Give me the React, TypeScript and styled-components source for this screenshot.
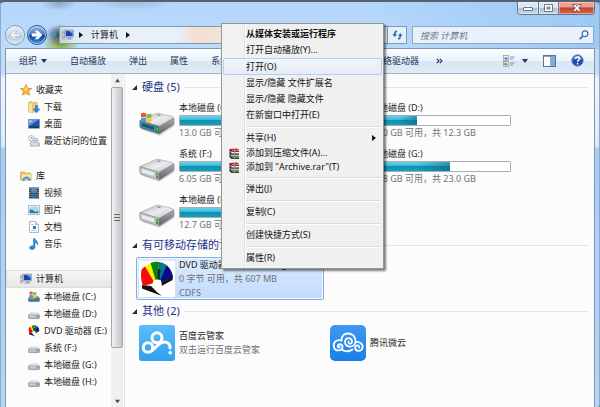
import React from "react";
import styled, { createGlobalStyle, css } from "styled-components";

const GlobalStyle = createGlobalStyle`
  * { box-sizing: border-box; }
  body {
    margin: 0;
    font: 9px/12px "Noto Sans", "Noto Sans CJK SC", sans-serif;
    color: #1c1c1c;
  }
  button, input { font: inherit; color: inherit; }
  button { padding: 0; border: 0; background: none; text-align: left; }
  ul { margin: 0; padding: 0; list-style: none; }
  svg { display: block; flex: none; }
`;

/* ---------- window frame ---------- */

const Desktop = styled.div`
  min-height: 100vh;
  display: flex;
  background: linear-gradient(#5b6b7c 60%, #4c9a3f 98%);
`;

const Frame = styled.div`
  position: relative;
  flex: 1;
  min-width: 0;
  display: flex;
  flex-direction: column;
  padding: 0 4px 1px;
  border: 1px solid #8fa9c6;
  border-top: 2px solid #56616e;
  border-bottom: 0;
  border-radius: 5px 5px 6px 0;
  background:
    radial-gradient(ellipse 15px 11px at 59px 33px, #414a58 10%, transparent 100%),
    radial-gradient(ellipse 18px 9px at 60px 42px, #8fae45 20%, transparent 100%),
    radial-gradient(ellipse 18px 8px at 58px 1px, #93abc8 10%, transparent 100%),
    radial-gradient(ellipse 42px 7px at 132px 1px, #a5bedd 10%, transparent 100%),
    linear-gradient(90deg, transparent 60%, #9cc8f4 100%) 0 0 / 100% 47px no-repeat,
    linear-gradient(#b3d6fc 0, #c3defb 72px, #eef6fe 76px, #dcebfb 145px, #a8cef6 146px, #b5d5f6 100%);
`;

const TitleBar = styled.header`
  height: 24px;
  display: flex;
  justify-content: flex-end;
  align-items: flex-start;
`;

const Caption = styled.div`
  display: flex;
  border: 1px solid #65758a;
  border-top: 0;
  border-radius: 0 0 4px 4px;
  overflow: hidden;
`;

const CaptionButton = styled.button<{ $close?: boolean }>`
  width: ${(p) => (p.$close ? 36 : 20)}px;
  height: 12px;
  display: grid;
  place-items: center;
  background: linear-gradient(#dfe9f5 0 45%, #a9bfd9 50%, #c4d9f0);
  box-shadow: inset 0 0 0 1px #ffffff66;
  & + & { border-left: 1px solid #65758a; }
  ${(p) => p.$close && css`background: linear-gradient(#e8a192 0 40%, #c5402c 50%, #d9674b);`}
`;

const NavBar = styled.div`
  display: flex;
  align-items: center;
  height: 18px;
  padding-right: 1px;
`;

const History = styled.div`
  display: flex;
  align-items: center;
  gap: 2px;
  width: 54px;
`;

const RoundButton = styled.button<{ $active?: boolean }>`
  flex: none;
  width: 20px;
  height: 20px;
  border-radius: 50%;
  display: grid;
  place-items: center;
  border: 1px solid ${(p) => (p.$active ? "#34588d" : "#8298b1")};
  box-shadow: inset 0 0 0 1px #ffffffaa;
  background: ${(p) =>
    p.$active
      ? "linear-gradient(#9dbbe2 0, #4a7fc8 45%, #0c3c94 52%, #2d9be6 100%)"
      : "linear-gradient(#e4edf7 0, #cddceb 48%, #b3c8de 52%, #d9e7f5 100%)"};
`;

const ArrowButton = styled.button`
  flex: none;
  display: grid;
  place-items: center;
  width: 10px;
  height: 16px;
`;

const AddressBar = styled.div`
  flex: 1;
  min-width: 0;
  height: 18px;
  display: flex;
  align-items: center;
  gap: 2px;
  border: 1px solid #8398ae;
  background: linear-gradient(90deg, #dfe9f3cc, #eef4fbe6 15%, #e6f0fb 34%, #f3dfd0 39%, #efe6de 50%, #e8f0f9 80%);
  padding-left: 2px;
`;

const Crumb = styled.button`
  padding: 0 3px;
  line-height: 14px;
`;

const Refresh = styled.button`
  margin-left: auto;
  width: 19px;
  height: 16px;
  display: grid;
  place-items: center;
  border-left: 1px solid #8398ae;
  background: #e6f0fb;
`;

const SearchBox = styled.label`
  flex: none;
  width: 182px;
  height: 18px;
  margin-left: 5px;
  padding: 0 4px 0 7px;
  display: flex;
  align-items: center;
  border: 1px solid #8fa8c3;
  background: #e9f2fc;
`;

const SearchInput = styled.input`
  flex: 1;
  min-width: 0;
  border: 0;
  padding: 0;
  height: 14px;
  background: none;
  outline: none;
  &::placeholder { color: #6d7680; font-style: italic; opacity: 1; }
`;

const Client = styled.div`
  flex: 1;
  display: flex;
  flex-direction: column;
  margin-top: 4px;
  border: 1px solid #8097b3;
  border-bottom-color: #c4d6ea;
  background: #fcfcfd;
`;

const Toolbar = styled.div`
  flex: none;
  height: 25px;
  display: flex;
  align-items: center;
  padding: 0 10px 1px 13px;
  gap: 23px;
  color: #1e395b;
  border-bottom: 1px solid #a0b3cb;
  background: linear-gradient(#fbfdff 0, #eaf2fb 48%, #dae6f4 52%, #dfeaf7 100%);
`;

const Tool = styled.button<{ $gap?: number }>`
  display: flex;
  align-items: center;
  gap: ${(p) => p.$gap ?? 4}px;
  white-space: nowrap;
  flex: none;
`;

const MoreTools = styled(Tool)`
  margin-left: -6px;
`;

const ToolIcons = styled.div`
  margin-left: auto;
  display: flex;
  align-items: center;
  gap: 15px;
`;

const Body = styled.div`
  flex: 1;
  display: flex;
`;

/* ---------- navigation pane ---------- */

const SidePane = styled.nav`
  flex: none;
  width: 105px;
  padding-top: 7px;
`;

const SideGroup = styled.ul`
  margin-bottom: 18px;
`;

const SideItem = styled.a<{ $root?: boolean; $selected?: boolean }>`
  display: flex;
  align-items: center;
  gap: 4px;
  height: ${(p) => (p.$selected ? 18 : 17)}px;
  padding-left: ${(p) => (p.$root ? (p.$selected ? 13 : 14) : 22)}px;
  color: inherit;
  text-decoration: none;
  white-space: nowrap;
  ${(p) => p.$selected && css`
    border: 1px solid #dcdcdc;
    border-right: 0;
    border-radius: 2px 0 0 2px;
    background: linear-gradient(#f8f8f8, #e6e6e6);
  `}
`;

const ScrollTrack = styled.div`
  flex: none;
  width: 12px;
  display: flex;
  flex-direction: column;
  align-items: center;
  background: #f0f0f1;
`;

const ScrollButton = styled.button`
  width: 12px;
  height: 13px;
  display: grid;
  place-items: center;
`;

const ScrollThumb = styled.div`
  flex: 11;
  width: 12px;
  display: grid;
  place-items: center;
  border: 1px solid #a5a5a8;
  border-radius: 2px;
  background: linear-gradient(90deg, #f3f3f4, #dcdcde 45%, #c3c4c8);
`;

const ScrollRest = styled.div`
  flex: 2;
`;

/* ---------- file list ---------- */

const Content = styled.main`
  flex: 1;
  min-width: 0;
  margin-left: 1px;
  padding: 5px 5px 0 7px;
  border-left: 1px solid #dce9f6;
`;

const GroupHeading = styled.h2`
  margin: 0;
  height: 16px;
  display: flex;
  align-items: center;
  gap: 5px;
  font-size: 11px;
  line-height: 16px;
  font-weight: 400;
  color: #1e3287;
  white-space: nowrap;
  &::after { content: ""; flex: 1; height: 1px; background: #e2e4e8; }
`;

const Tiles = styled.ul<{ $compact?: boolean }>`
  display: grid;
  grid-template-columns: 188px 188px;
  gap: 3px;
  margin: ${(p) => (p.$compact ? "2px 0 0 4px" : "4px 0 3px 4px")};
`;

const TileBox = styled.li<{ $selected?: boolean }>`
  height: 43px;
  display: flex;
  align-items: center;
  gap: 4px;
  padding: 0 3px 0 2px;
  border: 1px solid transparent;
  border-radius: 2px;
  ${(p) => p.$selected && css`
    border-color: #84acdd;
    background: linear-gradient(#dcebfd, #c1dbfc);
    box-shadow: inset 0 0 0 1px #eef6ff;
  `}
`;

const TileText = styled.div<{ $loose?: boolean }>`
  flex: 1;
  min-width: 0;
  display: flex;
  flex-direction: column;
  gap: ${(p) => (p.$loose ? 2 : 1)}px;
  white-space: nowrap;
`;

const Muted = styled.span`
  color: #6f7378;
`;

const Usage = styled.div`
  height: 11px;
  border: 1px solid #a9acb0;
  border-radius: 1px;
  background: #fff;
`;

const UsageFill = styled.div`
  height: 9px;
  background:
    linear-gradient(90deg, transparent 60%, #0b5f7a88),
    linear-gradient(#6fd3ea 0, #38bbd9 40%, #0c92b0 48%, #179fbd 100%);
`;

/* ---------- context menu ---------- */

const Menu = styled.div`
  position: absolute;
  left: 220px;
  top: 21px;
  width: 163px;
  padding: 1px 1px 2px;
  border: 1px solid #979797;
  background: linear-gradient(90deg, #f1f1f1 22px, #dfe0e1 22px 23px, #fff 23px 24px, #f0f0f0 24px);
  box-shadow: 2px 2px 2px #00000080;
`;

const MenuItem = styled.button<{ $size?: "tall" | "short"; $bold?: boolean; $hot?: boolean }>`
  width: 100%;
  height: ${(p) => (p.$size === "tall" ? 17 : p.$size === "short" ? 14 : 16)}px;
  display: grid;
  grid-template-columns: 16px 1fr 8px;
  align-items: center;
  column-gap: 4px;
  padding: 0 2px 0 2px;
  border: 1px solid transparent;
  border-radius: 2px;
  color: #111;
  white-space: nowrap;
  font-weight: ${(p) => (p.$bold ? 700 : 400)};
  ${(p) => p.$hot && css`
    border-color: #aecff7;
    background: linear-gradient(#f2f5f9, #e5ecf5);
  `}
`;

const MenuIcon = styled.span`
  display: grid;
  place-items: center;
`;

const MenuRule = styled.hr`
  margin: 3px 1px 2px 23px;
  height: 2px;
  border: 0;
  background: linear-gradient(#dcdcdc 50%, #fff 50%);
`;

/* ---------- drawings ---------- */

const Triangle = ({ dir, color = "#111", size = 6 }: { dir: "up" | "down" | "right"; color?: string; size?: number }) => {
  const d = { up: "M0 5 3 1 6 5Z", down: "M0 1 6 1 3 5Z", right: "M1 0 5 3 1 6Z" }[dir];
  return <svg width={size} height={size} viewBox="0 0 6 6"><path d={d} fill={color} /></svg>;
};

const Expanded = () => <svg width="5" height="5" viewBox="0 0 5 5"><path d="M5 0V5H0Z" fill="#2b2b2b" /></svg>;

const HistoryArrow = ({ back }: { back?: boolean }) => (
  <svg width="14" height="14" viewBox="0 0 14 14">
    <path
      d={back ? "M12 5.7H6.4L9 3H6L2 7l4 4h3L6.4 8.3H12Z" : "M2 5.7H7.6L5 3H8L12 7 8 11H5L7.6 8.3H2Z"}
      fill={back ? "#eef4fa" : "#fff"}
      stroke={back ? "#a9bccf" : "#fff"}
      strokeWidth=".6"
    />
  </svg>
);

const ComputerIcon = () => (
  <svg width="12" height="12" viewBox="0 0 12 12">
    <path d="M.5 2h2.2v8H.5Z" fill="#d3d8df" stroke="#8c96a3" strokeWidth=".5" />
    <path d="M1 4h1.2M1 8h1.2" stroke="#56657a" strokeWidth=".7" />
    <rect x="3" y="1" width="8.6" height="7" fill="#c9d5e3" stroke="#6e7e93" strokeWidth=".5" />
    <rect x="3.9" y="1.9" width="6.8" height="5.2" fill="#1745b8" />
    <path d="M7 1.9h3.7v3Z" fill="#7aaef2" />
    <path d="M6 8h3v1.6h1.4v1H4.6v-1H6Z" fill="#9aa8ba" />
  </svg>
);

const RefreshIcon = () => (
  <svg width="11" height="10" viewBox="0 0 11 10" fill="none" stroke="#2c6cb5" strokeWidth="1.5">
    <path d="M5 1.2C3 1.2 2.7 2.2 2.7 4.6" /><path d="M.4 4h4.6L2.7 7Z" fill="#2c6cb5" stroke="none" />
    <path d="M6 8.8c2 0 2.3-1 2.3-3.4" /><path d="M6 6h4.600L8.300 3Z" fill="#2c6cb5" stroke="none" />
  </svg>
);

const SearchIcon = () => (
  <svg width="10" height="10" viewBox="0 0 10 10" fill="none" stroke="#2d6fb8">
    <circle cx="6" cy="3.8" r="2.9" strokeWidth="1.2" fill="#f4f9ff" /><path d="M3.8 6 .8 9.2" strokeWidth="1.7" />
  </svg>
);

const ViewIcon = () => (
  <svg width="12" height="12" viewBox="0 0 12 12">
    <rect x=".5" y=".5" width="5" height="5" fill="#eef4fa" stroke="#8293a8" strokeWidth=".7" />
    <rect x="1.5" y="2.4" width="3" height="2.2" fill="#3c86c6" />
    <rect x=".5" y="6.5" width="5" height="5" fill="#fff" stroke="#8293a8" strokeWidth=".7" />
    <path d="M1.5 7.5H3V9H1.5Z" fill="#d8503a" /><path d="M3 7.5h1.5V9H3Z" fill="#e9bc32" />
    <path d="M1.5 9H3v1.5H1.5Z" fill="#3274bf" /><path d="M3 9h1.5v1.5H3Z" fill="#5aa94a" />
    <path d="M7 2h4.5M7 4h3M7 8h4.5M7 10h3" stroke="#75879d" strokeWidth=".9" />
  </svg>
);

const PreviewIcon = () => (
  <svg width="13" height="12" viewBox="0 0 13 12">
    <rect x=".5" y=".5" width="12" height="11" fill="#fff" stroke="#5d7390" />
    <path d="M1 1.5h11" stroke="#8ba4c1" /><rect x="8" y="2" width="4" height="9" fill="#72b3e6" />
    <path d="M7.5 1v10" stroke="#5d7390" strokeWidth=".6" />
  </svg>
);

const HelpIcon = () => (
  <svg width="13" height="13" viewBox="0 0 13 13">
    <circle cx="6.5" cy="6.5" r="5.8" fill="#1d4cb3" stroke="#8ea3c4" strokeWidth="1" />
    <path d="M2 5.5a4.6 4.6 0 0 1 9 0Q6.5 3.8 2 5.5Z" fill="#6f95dc" />
    <path d="M4.6 5c0-2.6 4-2.6 4-.3C8.600 6.200 6.600 6 6.600 7.800" fill="none" stroke="#fff" strokeWidth="1.5" />
    <circle cx="6.600" cy="9.700" r=".9" fill="#fff" />
  </svg>
);

const StarIcon = () => (
  <svg width="12" height="12" viewBox="0 0 12 12">
    <path d="M6 .5 7.6 4.2 11.600 4.500 8.600 7.200 9.500 11.200 6 9.100 2.500 11.200 3.400 7.200.4 4.500 4.400 4.200Z" fill="#fdb62d" stroke="#d9822b" strokeWidth=".7" />
    <path d="M6 2.200 7 5 6 6.500 3 5.200 5 4.900Z" fill="#ffe38a" />
  </svg>
);

const DownloadIcon = () => (
  <svg width="12" height="12" viewBox="0 0 12 12">
    <path d="M.8 1.200 4 .4 5 1.500h4V11H.8Z" fill="#f5cf70" stroke="#c79a3a" strokeWidth=".5" />
    <path d="M.8 1.200 4.500 2.500V12L.8 11Z" fill="#fbe4a0" stroke="#cfa650" strokeWidth=".4" />
    <path d="M7.200 4.500h2.600V8H12l-3.500 3.800L5 8h2.200Z" fill="#2b86d9" stroke="#1c63ae" strokeWidth=".4" />
  </svg>
);

const DesktopIcon = () => (
  <svg width="12" height="12" viewBox="0 0 12 12">
    <rect x=".4" y="1.400" width="11.200" height="8.800" fill="#1c57ae" stroke="#7b91ad" strokeWidth=".7" />
    <path d="M1 2h9L1 8Z" fill="#5d9be4" /><path d="M1 9h10" stroke="#102b55" strokeWidth="1.200" />
    <rect x="1.500" y="2.500" width="2" height="1.500" fill="#dbe9fa" />
  </svg>
);

const RecentIcon = () => (
  <svg width="12" height="12" viewBox="0 0 12 12">
    <path d="M3.500 3.500h6l.7 5h1.300v2.600H2.500V9Z" fill="#d6dce3" stroke="#8490a0" strokeWidth=".6" />
    <path d="M5 5.500h3.500M5 7.200h4" stroke="#8d99a8" strokeWidth=".6" />
    <circle cx="3.300" cy="3.300" r="2.800" fill="#f4f7fa" stroke="#929dac" strokeWidth=".7" />
    <path d="M3.300 1.700v1.800h1.500" fill="none" stroke="#56677d" strokeWidth=".6" />
  </svg>
);

const LibraryIcon = () => (
  <svg width="12" height="12" viewBox="0 0 12 12">
    <path d="M.5 2h4l1 1h5v7H.5Z" fill="#f2c966" stroke="#c59a45" strokeWidth=".6" />
    <path d="M1.500 4h10v6h-10Z" fill="#fae6a6" stroke="#cfa95a" strokeWidth=".4" />
    <path d="M2.500 10.500c0-5 8-5 8 0H8.600c0-2.400-4.200-2.400-4.200 0Z" fill="#53a5dc" stroke="#2f7db8" strokeWidth=".4" />
  </svg>
);

const VideoIcon = () => (
  <svg width="12" height="12" viewBox="0 0 12 12">
    <rect x="1" y=".5" width="10" height="11" fill="#353f4c" /><rect x="3.200" y="1" width="5.600" height="4.600" fill="#4f93cd" />
    <rect x="3.200" y="6.400" width="5.600" height="4.600" fill="#2f6ea5" />
    <path d="M2 1v10M10 1v10" stroke="#d5dbe2" strokeWidth=".9" strokeDasharray="1 1" />
    <path d="M4 5.400 6 3l2 2.400Z" fill="#b06a44" />
  </svg>
);

const PictureIcon = () => (
  <svg width="12" height="12" viewBox="0 0 12 12">
    <rect x=".4" y="1.400" width="11.200" height="9" fill="#fff" stroke="#98a3b0" strokeWidth=".7" />
    <rect x="1.600" y="2.600" width="8.800" height="6.600" fill="#a7d5f2" />
    <path d="M1.600 9.200V5.500Q4 5 6 7t4.400-.5v2.700Z" fill="#2b7a93" />
  </svg>
);

const DocumentIcon = () => (
  <svg width="12" height="12" viewBox="0 0 12 12">
    <path d="M1.500.5h6L10.500 3.500v8h-9Z" fill="#fff" stroke="#8c9bad" strokeWidth=".7" />
    <path d="M7.500.5v3h3" fill="#dde5ee" stroke="#8c9bad" strokeWidth=".6" />
    <path d="M3 3.500h3M3 9.500h6" stroke="#a7b4c4" strokeWidth=".7" /><rect x="5" y="5" width="3" height="3" fill="#2f7ecb" />
  </svg>
);

const MusicIcon = () => (
  <svg width="12" height="12" viewBox="0 0 12 12">
    <path d="M5.500.5H7c.3 2.200 3.800 2.600 2.600 6.500C9.200 5.300 8 4.700 7 4.600V9.200c0 3-5.500 3.200-5.500.6 0-1.900 2.500-2.500 4-1.800Z" fill="#1f8be0" stroke="#1668b4" strokeWidth=".4" />
  </svg>
);

const WindowsFlag = () => (
  <g>
    <path d="M0 1.500Q2.500 0 4.800 1.300V5.200Q2.500 4 0 5.500Z" fill="#e8532b" />
    <path d="M5.400 1.600Q8 2.800 10.400 1.300V5.200Q8 6.700 5.400 5.500Z" fill="#7cbb3d" />
    <path d="M0 6.200Q2.500 4.800 4.800 6V10Q2.500 8.700 0 10.200Z" fill="#3d9be0" />
    <path d="M5.400 6.300Q8 7.500 10.400 6V9.900Q8 11.400 5.400 10.200Z" fill="#fac33a" />
  </g>
);

const SmallDrive = ({ system }: { system?: boolean }) => (
  <svg width="12" height="12" viewBox="0 0 12 12">
    <path d="M2.200 5h7.600l1.800 2.400H.4Z" fill={system ? "#78a6b8" : "#eceef0"} stroke="#9a9ea3" strokeWidth=".4" />
    <rect x=".4" y="7" width="11.200" height="3.600" rx="1" fill={system ? "#27718c" : "#b9bdc2"} stroke="#74797f" strokeWidth=".6" />
    <path d="M1.500 8h6" stroke="#fff" strokeWidth=".7" opacity=".7" />
    <rect x="8.800" y="8.200" width="1.500" height="1.200" fill="#47a33c" />
    {system && <g transform="translate(1.500 0) scale(.65)"><WindowsFlag /></g>}
  </svg>
);

const DriveIcon = ({ system }: { system?: boolean }) => (
  <svg width="36" height="36" viewBox="0 0 36 36">
    <defs>
      <linearGradient id="drive-top" x1="0" y1="0" x2="1" y2="1">
        <stop offset="0" stopColor="#b0b2b5" /><stop offset=".5" stopColor="#ebecee" /><stop offset="1" stopColor="#bcbec1" />
      </linearGradient>
      <linearGradient id="drive-side" x1="0" y1="0" x2="0" y2="1">
        <stop offset="0" stopColor="#a9abae" /><stop offset="1" stopColor="#5f6266" />
      </linearGradient>
    </defs>
    <path d="M2 25 20 31.500 35 22v1.500L20.500 33 3 27Z" fill="#00000022" />
    <path d="M1 17.500 17 10.500Q18.500 10 20 10.400L33.500 13.500 35 15 20 23.500Z" fill="url(#drive-top)" stroke="#8c8f93" strokeWidth=".5" />
    <path d="M20 23.500 35 15v6.500L20.500 31 19.500 30.500Z" fill="url(#drive-side)" stroke="#7b7e82" strokeWidth=".5" />
    <path d="M.8 17.500 20 23.300V31L2 25.200Q.8 24.500.8 23Z" fill={system ? "#337b93" : "#c4c6c9"} stroke="#75797d" strokeWidth=".6" />
    <path d="M2.500 19.500 15.500 23.400v4L2.500 23.500Z" fill={system ? "#155b76" : "#e9eef2"} stroke="#a9adb1" strokeWidth=".4" />
    <path d="M17.200 23.800 19.300 24.400V29.600L17.200 29Z" fill="#2f8f2c" /><path d="M17.700 25 18.800 25.300V27L17.700 26.700Z" fill="#7de466" />
    <ellipse cx="20" cy="12.300" rx="1.800" ry=".8" fill="#8c8f93" />
    {system && <g transform="translate(2 9)"><WindowsFlag /></g>}
  </svg>
);

const FanShapes = () => (
  <g>
    <path d="M3 24 12 25 17 30 22.500 34.800 3 27.500Z" fill="#111" />
    <path d="M2.500 8.500 6.500 5 15 18 13.500 22.500 4 25Q1 17 2.500 8.500Z" fill="#f50b0b" />
    <path d="M6 5.500 11.500 2 17 18.500 14.500 20Z" fill="#fff200" />
    <path d="M11.500 2Q16 .2 20 1L19.500 18.500 16.500 19Z" fill="#078113" />
    <path d="M20 1Q24.500 1.500 27.500 4L22 19 19 18.500Z" fill="#08798a" />
    <path d="M27.500 4Q33 9 34 16L22.500 21.500 21.500 18.500Z" fill="#09098c" />
    <path d="M34 15.500 33.500 19 22.500 25V21.500Z" fill="#111" />
    <path d="M19 8 21.500 9 20.500 19 18.500 18.500Z" fill="#06222b" />
    <path d="M14 22.500Q14.500 18.500 18.500 18.500 22.500 19 22.500 24 20.500 28 22 33.500L18 31Q14 26.500 14 22.500Z" fill="#fff" />
  </g>
);

const DiscIcon = ({ small }: { small?: boolean }) => (
  <svg width={small ? 12 : 36} height={small ? 12 : 36} viewBox="0 0 36 36">
    {!small && <rect width="36" height="36" fill="#fff" />}
    <FanShapes />
  </svg>
);

const BaiduIcon = () => (
  <svg width="36" height="36" viewBox="0 0 36 36" fill="none" stroke="#fff" strokeWidth="3" strokeLinecap="round">
    <defs><linearGradient id="baidu" x1="0" y1="0" x2="0" y2="1"><stop stopColor="#5abdf9" /><stop offset="1" stopColor="#31a0ee" /></linearGradient></defs>
    <rect width="36" height="36" rx="3" fill="url(#baidu)" stroke="none" />
    <circle cx="9" cy="22.500" r="4.700" />
    <circle cx="18" cy="12.800" r="5" />
    <path d="M12.500 26C16.500 23.500 19 18 24 17.200 28.500 16.500 31.500 19 31 23" />
    <circle cx="31.200" cy="27.800" r="1.800" fill="#fff" stroke="none" />
  </svg>
);

const WeiyunIcon = () => (
  <svg width="36" height="36" viewBox="0 0 36 36" fill="none" stroke="#fff" strokeWidth="1.800" strokeLinecap="round">
    <defs><linearGradient id="weiyun" x1="0" y1="0" x2="0" y2="1"><stop stopColor="#4098f2" /><stop offset="1" stopColor="#197fe8" /></linearGradient></defs>
    <rect width="36" height="36" rx="5" fill="url(#weiyun)" stroke="none" />
    <path d="M11.500 15.500C11 5.500 26 6.500 25.500 16.500 25 23.500 14.500 23 15 16.500 15.500 11.500 22.500 12.500 22 17 21.500 19.500 18 19 18.500 16.500" />
    <path d="M11.500 15.500C6 14 3 18 3.800 21.500 5 27.500 13 26 12.500 21.500 12 18.500 7.500 18.500 7.700 21.500 8 23 10 22.500 9.500 21.500" />
    <path d="M12.500 25C15.500 27 20 26.500 22.500 24.500" />
    <path d="M26 17C30 16.500 33.500 19.500 32.500 22.800 31 27.500 25 26.500 25.200 22.500 25.500 19.500 29.800 20 29.200 22.500" />
  </svg>
);

const RarIcon = () => (
  <svg width="11" height="11" viewBox="0 0 11 11">
    <path d="M1 1 8 .5 10 2v2H3L1 3Z" fill="#a5253f" /><path d="M1 4 3 5h7v2.200H3L1 6Z" fill="#2e4a96" />
    <path d="M1 7l2 1h7v2.500H3L1 9Z" fill="#267047" />
    <path d="M3 2.500h7M3 5.700h7M3 9h7" stroke="#e6d9c0" strokeWidth=".5" />
    <path d="M1 1v8.500l2 1.200h7" stroke="#191919" strokeWidth=".9" fill="none" /><path d="M5.500 1v9.500" stroke="#c98a2b" strokeWidth="1" />
  </svg>
);

/* ---------- data ---------- */

type SideEntry = { label: string; icon: React.ReactNode };

const favourites: SideEntry[] = [
  { label: "收藏夹", icon: <StarIcon /> },
  { label: "下载", icon: <DownloadIcon /> },
  { label: "桌面", icon: <DesktopIcon /> },
  { label: "最近访问的位置", icon: <RecentIcon /> },
];
const libraries: SideEntry[] = [
  { label: "库", icon: <LibraryIcon /> },
  { label: "视频", icon: <VideoIcon /> },
  { label: "图片", icon: <PictureIcon /> },
  { label: "文档", icon: <DocumentIcon /> },
  { label: "音乐", icon: <MusicIcon /> },
];
const computer: SideEntry[] = [
  { label: "计算机", icon: <ComputerIcon /> },
  { label: "本地磁盘 (C:)", icon: <SmallDrive system /> },
  { label: "本地磁盘 (D:)", icon: <SmallDrive /> },
  { label: "DVD 驱动器 (E:)", icon: <DiscIcon small /> },
  { label: "系统 (F:)", icon: <SmallDrive /> },
  { label: "本地磁盘 (G:)", icon: <SmallDrive /> },
  { label: "本地磁盘 (H:)", icon: <SmallDrive /> },
];

const drives = [
  { name: "本地磁盘 (C:)", note: "13.0 GB 可用，共 40.0 GB", used: 67, system: true },
  { name: "本地磁盘 (D:)", note: "8.20 GB 可用，共 12.3 GB", used: 33 },
  { name: "系统 (F:)", note: "6.05 GB 可用，共 20.0 GB", used: 70 },
  { name: "本地磁盘 (G:)", note: "9.88 GB 可用，共 23.0 GB", used: 57 },
  { name: "本地磁盘 (H:)", note: "12.7 GB 可用，共 30.0 GB", used: 58 },
];

const tools = ["自动播放", "弹出", "属性", "系统属性", "卸载或更改程序", "映射网络驱动器"];

const SideList = ({ entries, selected }: { entries: SideEntry[]; selected?: boolean }) => (
  <SideGroup>
    {entries.map((e, i) => (
      <li key={e.label}>
        <SideItem href="#" $root={i === 0} $selected={selected && i === 0}>{e.icon}{e.label}</SideItem>
      </li>
    ))}
  </SideGroup>
);

type EntryProps = { label: string; icon?: React.ReactNode; size?: "tall" | "short"; bold?: boolean; hot?: boolean; submenu?: boolean };

const Entry = ({ label, icon, size, bold, hot, submenu }: EntryProps) => (
  <MenuItem role="menuitem" $size={size} $bold={bold} $hot={hot}>
    <MenuIcon>{icon}</MenuIcon>
    <span>{label}</span>
    {submenu && <Triangle dir="right" />}
  </MenuItem>
);

export default function App() {
  return (
    <Desktop>
      <GlobalStyle />
      <Frame>
        <TitleBar>
          <Caption>
            <CaptionButton aria-label="最小化">
              <svg width="10" height="5" viewBox="0 0 10 5"><rect x=".5" y="1.500" width="9" height="3" rx=".5" fill="#fff" stroke="#56616f" strokeWidth=".8" /></svg>
            </CaptionButton>
            <CaptionButton aria-label="最大化">
              <svg width="9" height="8" viewBox="0 0 9 8"><path d="M.5.500h8v7h-8ZM3 3v2h3V3Z" fillRule="evenodd" fill="#fff" stroke="#56616f" strokeWidth=".8" /></svg>
            </CaptionButton>
            <CaptionButton aria-label="关闭" $close>
              <svg width="10" height="8" viewBox="0 0 10 8"><path d="M.5.500h3L5 2.300 6.500.500h3L6.700 4l2.800 3.500h-3L5 5.700 3.500 7.500h-3L3.300 4Z" fill="#fff" stroke="#5d3a3a" strokeWidth=".7" /></svg>
            </CaptionButton>
          </Caption>
        </TitleBar>

        <NavBar>
          <History>
            <RoundButton aria-label="后退"><HistoryArrow back /></RoundButton>
            <RoundButton aria-label="前进" $active><HistoryArrow /></RoundButton>
            <ArrowButton aria-label="历史记录"><Triangle dir="down" color="#2f9bd2" /></ArrowButton>
          </History>
          <AddressBar>
            <ComputerIcon />
            <ArrowButton aria-label="展开"><Triangle dir="right" /></ArrowButton>
            <Crumb>计算机</Crumb>
            <ArrowButton aria-label="展开计算机"><Triangle dir="right" /></ArrowButton>
            <Refresh aria-label="刷新"><RefreshIcon /></Refresh>
          </AddressBar>
          <SearchBox>
            <SearchInput type="text" aria-label="搜索" placeholder="搜索 计算机" />
            <SearchIcon />
          </SearchBox>
        </NavBar>

        <Client>
          <Toolbar>
            <Tool>组织<Triangle dir="down" color="#1e395b" /></Tool>
            {tools.map((t) => <Tool key={t}>{t}</Tool>)}
            <MoreTools aria-label="更多">
              <svg width="7" height="6" viewBox="0 0 7 6"><path d="M.8.800 3 3 .8 5.200M3.800.800 6 3 3.800 5.200" fill="none" stroke="#1e395b" strokeWidth="1.100" /></svg>
            </MoreTools>
            <ToolIcons>
              <Tool aria-label="更改视图" $gap={7}><ViewIcon /><Triangle dir="down" color="#1e395b" /></Tool>
              <Tool aria-label="预览窗格"><PreviewIcon /></Tool>
              <Tool aria-label="帮助"><HelpIcon /></Tool>
            </ToolIcons>
          </Toolbar>

          <Body>
            <SidePane>
              <SideList entries={favourites} />
              <SideList entries={libraries} />
              <SideList entries={computer} selected />
            </SidePane>
            <ScrollTrack>
              <ScrollButton aria-label="向上滚动"><Triangle dir="up" color="#4a4a4a" size={5} /></ScrollButton>
              <ScrollThumb>
                <svg width="6" height="7" viewBox="0 0 6 7"><path d="M0 .5h6M0 3.500h6M0 6.500h6" stroke="#6b6b6b" /></svg>
              </ScrollThumb>
              <ScrollRest />
              <ScrollButton aria-label="向下滚动"><Triangle dir="down" color="#4a4a4a" size={5} /></ScrollButton>
            </ScrollTrack>

            <Content>
              <GroupHeading><Expanded />硬盘 (5)</GroupHeading>
              <Tiles>
                {drives.map((d) => (
                  <TileBox key={d.name}>
                    <DriveIcon system={d.system} />
                    <TileText>
                      <span>{d.name}</span>
                      <Usage role="meter" aria-label={d.name} aria-valuenow={d.used} aria-valuemin={0} aria-valuemax={100}>
                        <UsageFill style={{ width: `${d.used}%` }} />
                      </Usage>
                      <Muted>{d.note}</Muted>
                    </TileText>
                  </TileBox>
                ))}
              </Tiles>

              <GroupHeading><Expanded />有可移动存储的设备 (1)</GroupHeading>
              <Tiles>
                <TileBox $selected>
                  <DiscIcon />
                  <TileText $loose>
                    <span>DVD 驱动器 (E:) WIN7 Img</span>
                    <Muted>0 字节 可用，共 607 MB</Muted>
                    <Muted>CDFS</Muted>
                  </TileText>
                </TileBox>
              </Tiles>

              <GroupHeading><Expanded />其他 (2)</GroupHeading>
              <Tiles $compact>
                <TileBox>
                  <BaiduIcon />
                  <TileText $loose>
                    <span>百度云管家</span>
                    <Muted>双击运行百度云管家</Muted>
                  </TileText>
                </TileBox>
                <TileBox>
                  <WeiyunIcon />
                  <TileText><span>腾讯微云</span></TileText>
                </TileBox>
              </Tiles>
            </Content>
          </Body>
        </Client>

        <Menu role="menu">
          <Entry label="从媒体安装或运行程序" size="tall" bold />
          <Entry label="打开自动播放(Y)..." />
          <Entry label="打开(O)" size="tall" hot />
          <Entry label="显示/隐藏 文件扩展名" />
          <Entry label="显示/隐藏 隐藏文件" />
          <Entry label="在新窗口中打开(E)" />
          <MenuRule />
          <Entry label="共享(H)" submenu />
          <Entry label="添加到压缩文件(A)..." size="short" icon={<RarIcon />} />
          <Entry label={'添加到 "Archive.rar"(T)'} size="short" icon={<RarIcon />} />
          <MenuRule />
          <Entry label="弹出(J)" />
          <MenuRule />
          <Entry label="复制(C)" />
          <MenuRule />
          <Entry label="创建快捷方式(S)" />
          <MenuRule />
          <Entry label="属性(R)" />
        </Menu>
      </Frame>
    </Desktop>
  );
}
